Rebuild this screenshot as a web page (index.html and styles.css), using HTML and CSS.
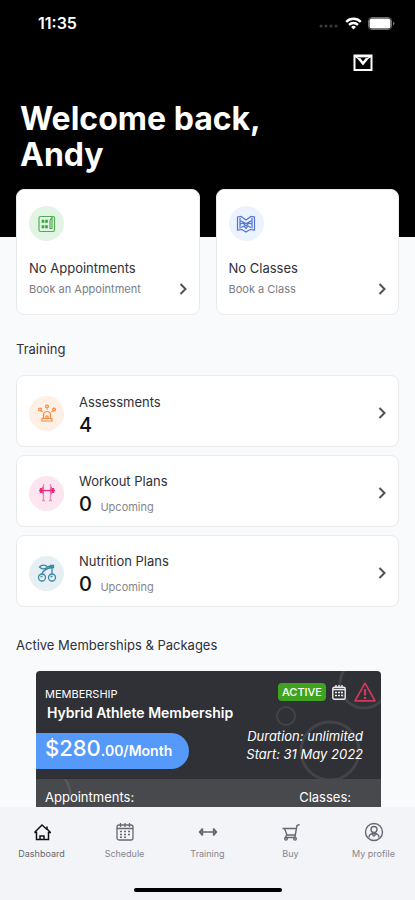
FILE: index.html
```html
<!DOCTYPE html>
<html lang="en">
<head>
<meta charset="utf-8">
<meta name="viewport" content="width=device-width, initial-scale=1">
<title>Dashboard</title>
<link rel="stylesheet" href="styles.css">
</head>
<body>
<div class="app">
  <main class="content">
    <header class="hero">
      <div class="status">
        <span class="clock">11:35</span>
        <span class="signals">
          <svg width="20" height="12" viewBox="0 0 20 12" fill="#3c3c3c"><circle cx="2" cy="9" r="1.500"/><circle cx="7" cy="9" r="1.500"/><circle cx="12" cy="9" r="1.500"/><circle cx="17" cy="9" r="1.500"/></svg>
          <svg width="17" height="13" viewBox="0 0 17 13" fill="none" stroke="#fff" stroke-width="2.400"><path d="M1.200 4.800a10.400 10.400 0 0 1 14.600 0"/><path d="M4 7.900a6.400 6.400 0 0 1 9 0"/><path d="M8.500 12.500l-2.400-2.600a3.500 3.500 0 0 1 4.800 0z" fill="#fff" stroke="none"/></svg>
          <svg width="27" height="13" viewBox="0 0 27 13"><rect x=".5" y=".5" width="23" height="12" rx="3.500" fill="none" stroke="#6d6d6d"/><rect x="1.500" y="1.500" width="21" height="10" rx="2.500" fill="#fff"/><path d="M25 4.500q3 2 0 4z" fill="#777"/></svg>
        </span>
      </div>
      <button class="mail" aria-label="Messages">
        <svg width="20" height="18" viewBox="0 0 20 18" fill="none" stroke="#fff" stroke-width="2"><path d="M1.500 1.500h17v14.500h-17z"/><path d="M2 2.200h16" stroke-width="2.400"/><path d="M3 3l3 2M17 3l-3 2" stroke-width="1.500"/><path d="M6 4.500l4 5 4-5" stroke-width="2.600"/></svg>
      </button>
      <h1>Welcome back,<br>Andy</h1>
    </header>

    <section class="tiles">
      <a class="card tile" href="#appointments">
        <span class="badge green"><svg width="18" height="18" viewBox="0 0 18 18" fill="none" stroke="#4fae55" stroke-width="1.200"><rect x="1" y="1.500" width="15.500" height="15" rx="1.500"/><path d="M12 13.500V5.500l2-3v11z"/><path d="M4 5h2v2.500H4zM7.500 5h2v2.500h-2zM4 10.500h2V13H4zM7.500 10.500h2V13h-2z" fill="#2f9d3a" stroke-width=".8"/></svg></span>
        <span class="tile-title">No Appointments</span>
        <span class="tile-link">Book an Appointment<svg class="chevron" width="8" height="12" viewBox="0 0 8 12"><path d="M1.500 1l5 5-5 5"/></svg></span>
      </a>
      <a class="card tile" href="#classes">
        <span class="badge blue"><svg width="20" height="18" viewBox="0 0 20 18" fill="none" stroke="#4f75d0" stroke-width="1.200"><path d="M1.500 2l3.500-.5 5 3.500 5-3.500 3.500.5v13l-4.500-.5-4 2.500-4-2.500-4.500.5z"/><path d="M4 3v10.500M16 3v10.500M4 5.500l6 3 6-3M4.500 9l2.500-1 3 3 3-3 2.500 1M5 12.500l3-1.500 2 2.500 2-2.500 3 1.500"/></svg></span>
        <span class="tile-title">No Classes</span>
        <span class="tile-link">Book a Class<svg class="chevron" width="8" height="12" viewBox="0 0 8 12"><path d="M1.500 1l5 5-5 5"/></svg></span>
      </a>
    </section>

    <section class="group">
      <h2>Training</h2>
      <div class="list">
        <a class="card row" href="#assessments">
          <span class="badge orange"><svg width="20" height="18" viewBox="0 0 20 18" fill="none" stroke="#f58a42" stroke-width="1.200"><path d="M5 17h10v-2.500H5zM6.500 14.500v-3.500a3.500 3.500 0 0 1 7 0v3.500M9 14.500v-2.500h2v2.500"/><circle cx="10" cy="2.500" r="1.400"/><circle cx="3" cy="5.500" r="1.400"/><circle cx="17" cy="5.500" r="1.400"/><path d="M4.500 7l1 1M15.500 7l-1 1M10 4.500v1"/></svg></span>
          <span class="row-text"><span class="row-title">Assessments</span><span class="row-value"><b>4</b></span></span>
          <svg class="chevron" width="8" height="12" viewBox="0 0 8 12"><path d="M1.500 1l5 5-5 5"/></svg>
        </a>
        <a class="card row" href="#workouts">
          <span class="badge pink"><svg width="18" height="18" viewBox="0 0 18 18" fill="none" stroke="#e72d82" stroke-width="1.300"><path d="M1 6.500h16"/><path d="M3 4v5M15 4v5" stroke-width="2.400"/><path d="M5 2.500v8M13 2.500v8" stroke-width="1.400"/><path d="M5.500 9.500v7.500M12.500 9.500v7.500M4 16.500h3M11 16.500h3M5.500 0v3M12.500 0v3" stroke="#f08ab8"/></svg></span>
          <span class="row-text"><span class="row-title">Workout Plans</span><span class="row-value"><b>0</b> <small>Upcoming</small></span></span>
          <svg class="chevron" width="8" height="12" viewBox="0 0 8 12"><path d="M1.500 1l5 5-5 5"/></svg>
        </a>
        <a class="card row" href="#nutrition">
          <span class="badge teal"><svg width="20" height="18" viewBox="0 0 20 18" fill="none" stroke="#3d87a5" stroke-width="1.300"><circle cx="5" cy="13.500" r="3.500"/><circle cx="15" cy="13.500" r="3.500"/><path d="M15 10V2.500H11M5 10c.5-3 3-5 9.500-6.500"/><path d="M2.500 3c2-2.500 6-2.500 8 0-2 2.500-6 2.500-8 0z"/><path d="M3.500 12.500h2M13.500 12.500h2M13.500 1.500h3v2h-3z"/></svg></span>
          <span class="row-text"><span class="row-title">Nutrition Plans</span><span class="row-value"><b>0</b> <small>Upcoming</small></span></span>
          <svg class="chevron" width="8" height="12" viewBox="0 0 8 12"><path d="M1.500 1l5 5-5 5"/></svg>
        </a>
      </div>
    </section>

    <section class="group">
      <h2>Active Memberships &amp; Packages</h2>
      <article class="membership">
        <svg class="rings" width="110" height="115" viewBox="0 0 110 115" fill="none" stroke="#434448" stroke-width="3"><circle cx="93" cy="13" r="24"/><circle cx="15" cy="45" r="9" stroke-width="2"/><circle cx="59" cy="80" r="29"/></svg>
        <div class="plan-head">
          <span class="kind">MEMBERSHIP</span>
          <span class="plan-status">
            <span class="active">ACTIVE</span>
            <svg width="14" height="15" viewBox="0 0 14 15" fill="none" stroke="#ececec" stroke-width="1.400"><rect x=".8" y="2.300" width="12.400" height="12" rx="1.500"/><path d="M1 4.500h12M4 0v3M7 0v3M10 0v3"/><path d="M3 7.500h2M6 7.500h2M9 7.500h2M3 10.500h2M6 10.500h2M9 10.500h2" stroke-width="1.700"/></svg>
            <svg class="warning" width="22" height="20" viewBox="0 0 22 20" fill="none" stroke="#d13a5c" stroke-width="1.700" stroke-linejoin="round"><path d="M11 1.200L21 18.800H1z"/><path d="M11 7v6.500M11 15v2" stroke-width="2.200"/></svg>
          </span>
        </div>
        <h3>Hybrid Athlete Membership</h3>
        <div class="plan-info">
          <p class="price"><span class="amount">$280</span>.00/Month</p>
          <p class="dates">Duration: unlimited<br>Start: 31 May 2022</p>
        </div>
        <div class="plan-foot">
          <svg class="arc" width="10" height="20" viewBox="0 0 10 20" fill="none" stroke="#5b5c60" stroke-width="2"><path d="M2 0q6 8 5 18"/></svg>
          <span>Appointments:</span><span>Classes:</span>
        </div>
      </article>
    </section>
  </main>

  <footer class="bottom">
    <nav class="tabs">
      <a href="#dashboard" class="current"><svg width="18" height="20" viewBox="0 0 18 20" fill="none" stroke="#111" stroke-width="1.500"><path d="M1.500 10.500h2V17.500h12V10.500h2L14 7V4.500M1.500 10.500L9 3l5 4.500"/><path d="M7 17v-3h4v3"/></svg><span>Dashboard</span></a>
      <a href="#schedule"><svg width="18" height="20" viewBox="0 0 18 20" fill="none" stroke="#666874" stroke-width="1.300"><rect x="1" y="3" width="16" height="15" rx="2"/><path d="M1 6.500h16M4.500 1v4M9 1v4M13.500 1v4"/><path d="M4 9.500h2M8 9.500h2M12 9.500h2M4 12.500h2M8 12.500h2M12 12.500h2M4 15.300h2M8 15.300h2" stroke-width="1.500"/></svg><span>Schedule</span></a>
      <a href="#training"><svg width="20" height="20" viewBox="0 0 20 20" fill="none" stroke="#666874" stroke-width="1.500"><path d="M1 10h18M4.500 6.500L1.500 10l3 3.500M15.500 6.500l3 3.500-3 3.500M4.500 6.500v7M15.500 6.500v7"/></svg><span>Training</span></a>
      <a href="#buy"><svg width="18" height="20" viewBox="0 0 18 20" fill="none" stroke="#666874" stroke-width="1.400"><path d="M.5 6.500H14M2.500 6.500L5 13M4 13h9M17.500 2.500L15 3.500 12.800 15.500H3.500L4.500 13"/><circle cx="4" cy="16.800" r="1.300"/><circle cx="13" cy="16.800" r="1.300"/></svg><span>Buy</span></a>
      <a href="#profile"><svg width="20" height="20" viewBox="0 0 20 20" fill="none" stroke="#666874" stroke-width="1.400"><circle cx="10" cy="10" r="8.500"/><circle cx="10" cy="7.500" r="3"/><path d="M5 15.500c0-3 2-4 5-4s5 1 5 4M8 12l2 2 2-2"/></svg><span>My profile</span></a>
    </nav>
    <div class="home-bar"></div>
  </footer>
</div>
</body>
</html>
```
FILE: styles.css
```css
* { box-sizing: border-box; }
body { margin: 0; background: #f8fafc; color: #303036; font-family: Inter, "Liberation Sans", sans-serif; }
h1, h2, h3, p { margin: 0; }
a { color: inherit; text-decoration: none; }
svg { display: block; flex: none; }

.app { display: flex; flex-direction: column; height: 100vh; }
.content { flex: 1; min-height: 0; overflow: hidden; }

.hero { display: flex; flex-direction: column; background: #000; color: #fff; padding: 12px 20px 64px; }
.status { display: flex; align-items: center; justify-content: space-between; padding: 0 0 0 18px; height: 22px; }
.clock { font-size: 16px; font-weight: 600; }
.signals { display: flex; align-items: center; gap: 6px; }
.mail { align-self: flex-end; margin: 20px 22px 0 0; padding: 0; border: 0; background: none; }
h1 { margin-top: 29px; font-size: 32px; line-height: 36px; font-weight: 700; }

.tiles { display: grid; grid-template-columns: 1fr 1fr; gap: 16px; margin-top: -48px; padding: 0 16px; }
.card { background: #fff; border: 1px solid #e9eaec; border-radius: 8px; }
.tile { display: flex; flex-direction: column; padding: 16px 12px; height: 126px; }
.badge { display: grid; place-items: center; flex: none; width: 35px; height: 35px; border-radius: 50%; }
.green { background: #e2f4e3; }
.blue { background: #edf3fe; }
.orange { background: #fef0e5; }
.pink { background: #fde6f0; }
.teal { background: #e6eff3; }
.tile-title { margin-top: 18px; font-size: 13px; line-height: 18px; }
.tile-link { display: flex; align-items: center; justify-content: space-between; margin-top: 4px; font-size: 11px; line-height: 16px; color: #7c7c86; }
.chevron { fill: none; stroke: #505058; stroke-width: 2; }

.group { padding: 0 16px; }
h2 { padding: 24px 0 16px; font-size: 13px; line-height: 20px; font-weight: 400; }
.list { display: grid; gap: 8px; margin-bottom: 4px; }
.row { display: flex; align-items: center; gap: 15px; min-height: 72px; padding: 4px 12px 0; }
.row-text { flex: 1; display: flex; flex-direction: column; padding-top: 6px; }
.row-title { font-size: 13px; line-height: 18px; }
.row-value { line-height: 28px; }
.row-value b { font-size: 20px; font-weight: 500; color: #111; margin-right: 4px; }
.row-value small { font-size: 11px; color: #85858e; }

.membership { position: relative; overflow: hidden; margin: 0 18px 0 20px; padding-top: 10px; border-radius: 4px; background: #303136; color: #fff; }
.rings { position: absolute; right: 0; top: 0; }
.plan-head { position: relative; display: flex; justify-content: space-between; padding: 0 5px 0 9px; height: 22px; }
.kind { padding-top: 4px; font-size: 11px; line-height: 18px; }
.plan-status { display: flex; align-items: center; gap: 6px; }
.warning { margin-left: 2px; }
.active { padding: 0 4px; border-radius: 4px; background: #3fa320; font-size: 11px; line-height: 18px; font-weight: 500; }
h3 { position: relative; padding-left: 11px; font-size: 14px; line-height: 20px; font-weight: 600; }
.plan-info { position: relative; display: flex; justify-content: space-between; align-items: flex-start; padding-top: 4px; }
.price { margin-top: 6px; padding: 0 17px 0 9px; border-radius: 0 18px 18px 0; background: #5599fa; font-size: 14px; line-height: 36px; font-weight: 600; }
.amount { font-size: 22px; line-height: 24px; font-weight: 500; }
.dates { padding-right: 18px; font-size: 13px; line-height: 18px; font-style: italic; text-align: right; }
.plan-foot { position: relative; display: flex; justify-content: space-between; margin-top: 10px; padding: 8px 30px 20px 9px; background: #48494d; font-size: 13px; line-height: 20px; }
.arc { position: absolute; left: 27px; top: 0; }

.bottom { background: #f3f4f7; padding: 15px 0 8px; }
.tabs { display: grid; grid-template-columns: repeat(5, 1fr); font-size: 9px; line-height: 14px; color: #85858e; }
.tabs a { display: flex; flex-direction: column; align-items: center; gap: 5px; }
.tabs .current { color: #66666e; }
.home-bar { width: 148px; height: 4px; margin: 27px auto 0; border-radius: 2px; background: #000; }
```
